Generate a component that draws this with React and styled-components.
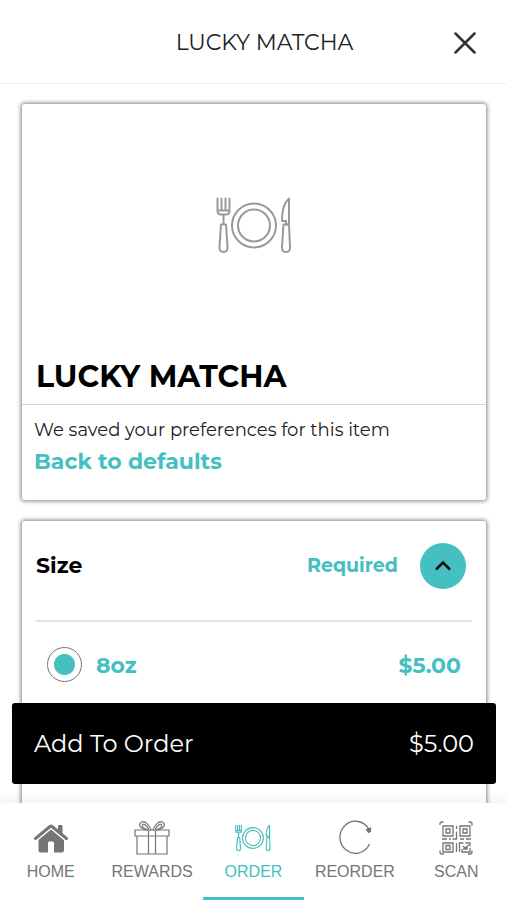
import React, { useState } from "react";
import styled, { createGlobalStyle } from "styled-components";

const teal = "#45bfbf";
const grey = "#757575";

const GlobalStyle = createGlobalStyle`
  * {
    box-sizing: border-box;
  }
  body {
    margin: 0;
    background: #fff;
    color: #000;
    font-family: Montserrat, Inter, sans-serif;
  }
  button {
    padding: 0;
    border: 0;
    background: none;
    font: inherit;
    cursor: pointer;
  }
  h1,
  h2,
  p {
    margin: 0;
  }
`;

const StyledPage = styled.div`
  height: 100vh;
  display: flex;
  flex-direction: column;
`;

const StyledHeader = styled.header`
  display: grid;
  grid-template-columns: 60px 1fr 60px;
  align-items: center;
  padding: 2px 12px 0;
  height: 84px;
  border-bottom: 1px solid #f0f0f0;
  text-align: center;

  & h1 {
    padding-left: 22px;
    font-size: 22px;
    line-height: 28px;
    font-weight: 400;
    color: #222;
  }
`;

const CloseButton = styled.button`
  display: flex;
  justify-content: center;
  color: #333;
`;

const StyledContent = styled.div`
  flex: 1;
  min-height: 0;
  position: relative;
`;

const StyledMain = styled.main`
  height: 100%;
  overflow: hidden;
  padding: 20px 21px 0 22px;
  display: flex;
  flex-direction: column;
  gap: 21px;
`;

const StyledCard = styled.section`
  flex-shrink: 0;
  border-radius: 3px;
  background: #fff;
  box-shadow: 0 0 4px 1px rgba(0, 0, 0, 0.5);
`;

const ItemImage = styled.div`
  height: 242px;
  display: flex;
  align-items: center;
  justify-content: center;
  color: #999;
`;

const ItemName = styled.h2`
  padding: 12px 14px 8px;
  border-bottom: 1px solid #d4d4d4;
  font-size: 30px;
  line-height: 38px;
  font-weight: 700;
`;

const Preferences = styled.div`
  padding: 9px 12px 22px;
  font-size: 18px;
  line-height: 32px;
  color: #222;

  & button {
    display: block;
    font-size: 22px;
    line-height: 32px;
    font-weight: 700;
    color: ${teal};
  }
`;

const GroupHeader = styled.div`
  margin: 0 14px;
  padding: 0 6px 10px 0;
  height: 101px;
  border-bottom: 2px solid #e2e2e2;
  display: flex;
  align-items: center;
  gap: 22px;
  font-size: 19px;
  line-height: 26px;
  font-weight: 700;

  & h2 {
    margin-right: auto;
    font-size: 22px;
  }
  & span {
    color: ${teal};
  }
`;

const ToggleButton = styled.button`
  width: 46px;
  height: 46px;
  border-radius: 50%;
  background: ${teal};
  color: #111;
  display: flex;
  align-items: center;
  justify-content: center;
`;

const OptionList = styled.div`
  padding-bottom: 160px;
`;

const Option = styled.label`
  display: flex;
  align-items: center;
  gap: 14px;
  height: 84px;
  padding: 0 25px 0 25px;
  color: ${teal};
  font-size: 22px;
  line-height: 28px;
  font-weight: 700;
  cursor: pointer;

  & input {
    appearance: none;
    flex-shrink: 0;
    width: 35px;
    height: 35px;
    margin: 0;
    border: 1px solid #777;
    border-radius: 50%;
  }
  & input:checked {
    background: radial-gradient(circle, ${teal} 10px, #fff 11px);
  }
  & span {
    padding-top: 4px;
  }
  & span:last-child {
    margin-left: auto;
  }
`;

const AddButton = styled.button`
  position: absolute;
  left: 12px;
  right: 11px;
  bottom: 19px;
  height: 81px;
  padding: 0 22px;
  border-radius: 3px;
  background: #000;
  color: #fff;
  display: flex;
  align-items: center;
  justify-content: space-between;
  font-size: 24px;
`;

const StyledNav = styled.nav`
  position: relative;
  display: grid;
  grid-template-columns: repeat(5, 1fr);
  height: 97px;
  background: #fff;
  box-shadow: 0 -1px 12px 2px rgba(0, 0, 0, 0.06);
`;

const NavLink = styled.a`
  display: flex;
  flex-direction: column;
  align-items: center;
  gap: 6px;
  padding-top: 17px;
  border-bottom: 3px solid ${(props) => (props.$active ? teal : "transparent")};
  color: ${(props) => (props.$active ? teal : grey)};
  font-family: "Liberation Sans", Arial, sans-serif;
  font-size: 16px;
  line-height: 20px;
  text-decoration: none;
`;

const PlateIcon = ({ width = 76, stroke = 2 }) => (
  <svg
    width={width}
    height={Math.round(width * 0.75)}
    viewBox="0 0 76 57"
    fill="none"
    stroke="currentColor"
    strokeWidth={stroke}
    strokeLinejoin="round"
    strokeLinecap="round"
  >
    <path d="M1.500 1.500v12q0 4 3.500 4h5q3.500 0 3.500-4v-12M5.500 1.500v11M9.500 1.500v11M1.500 13.500h12M7.500 18v9" />
    <path d="M5 27.500h5l1.500 22q.500 5.500-4 5.500t-4-5.500z" />
    <circle cx="38" cy="28.500" r="22" />
    <circle cx="38" cy="28.500" r="16" />
    <path d="M73 1.500q-7 6-7 22.500h4v3.500H73z" />
    <path d="M67.500 27.500H73l1 22q.500 5.500-4 5.500t-4-5.500z" />
  </svg>
);

const CloseIcon = () => (
  <svg width="22" height="22" viewBox="0 0 22 22" stroke="currentColor">
    <path d="M1.500 1.500l19 19M20.500 1.500l-19 19" strokeWidth="2.500" strokeLinecap="round" />
  </svg>
);

const ChevronIcon = () => (
  <svg width="18" height="12" viewBox="0 0 18 12" fill="none" stroke="currentColor">
    <path d="M2 9.500l7-7 7 7" strokeWidth="2.500" />
  </svg>
);

const HomeIcon = () => (
  <svg width="36" height="36" viewBox="0 0 36 36" fill="currentColor">
    <path d="M5.500 18.500L18 8l13 10.500V30q0 2.500-2.500 2.500H21V23q0-1.500-1.500-1.500h-3Q15 21.500 15 23v9.500H8Q5.500 32.500 5.500 30z" />
    <path
      d="M2 19L17 6.500q1-.800 2 0L34 19"
      fill="none"
      stroke="#fff"
      strokeWidth="6"
    />
    <path
      d="M2.500 18.500L17 6.500q1-.800 2 0l14.500 12"
      fill="none"
      stroke="currentColor"
      strokeWidth="3"
      strokeLinecap="round"
    />
    <path d="M25 6q0-1 1-1h2.500q1 0 1 1V14L25 10z" />
  </svg>
);

const GiftIcon = () => (
  <svg
    width="36"
    height="36"
    viewBox="0 0 36 36"
    fill="none"
    stroke="currentColor"
    strokeWidth="1.200"
  >
    <path d="M1 10h34v6H1zM3 16h30v18H3zM14.500 10v24M21.500 10v24" />
    <path d="M14.500 10C5 9 4 4 7.500 2S15 5 17 10M21.500 10C31 9 32 4 28.500 2S21 5 19 10" />
    <path d="M12.500 9.500Q7 6.500 8.500 4.500T15 9.500M23.500 9.500Q29 6.500 27.500 4.500T21 9.500" />
  </svg>
);

const OrderIcon = () => (
  <svg width="36" height="36" viewBox="0 -9 76 75">
    <PlateIcon stroke={2.4} />
  </svg>
);

const ReorderIcon = () => (
  <svg width="36" height="36" viewBox="0 0 36 36" fill="none" stroke="currentColor">
    <path d="M32 9.500A15.500 16 0 1 0 32.500 24" strokeWidth="1.300" />
    <path d="M29.500 9.500l4-1.500v3.500l-2 1z" fill="currentColor" strokeWidth="1.200" />
  </svg>
);

const ScanIcon = () => (
  <svg
    width="36"
    height="36"
    viewBox="0 0 36 36"
    fill="none"
    stroke="currentColor"
    strokeWidth="1.300"
  >
    <path d="M2 5V4q0-2 2-2h1.500M30.500 2H32q2 0 2 2v1.500M2 30.500V32q0 2 2 2h2M30 34h2q2 0 2-2v-1.500" />
    <path d="M5 6h10v10H5zM22 6h10v10H22zM5 23h10v9H5z" />
    <path d="M8 9h4v4H8zM25 9h4v4h-4zM8 25.500h4v4H8z" />
    <path d="M18.500 6v3M18.500 11.500v7.500h-4M4 19h5M11 19h2M22 19h4M28 19h5M18.500 23v9M21.500 32V23h4M27.500 23h4.500v3M24 29v3h8v-4M25 29h4v-3M25 26l2 2 4-3" />
  </svg>
);

const navItems = [
  { label: "HOME", icon: <HomeIcon /> },
  { label: "REWARDS", icon: <GiftIcon /> },
  { label: "ORDER", icon: <OrderIcon /> },
  { label: "REORDER", icon: <ReorderIcon /> },
  { label: "SCAN", icon: <ScanIcon /> },
];

const App = () => {
  const [size, setSize] = useState("8oz");
  const [open, setOpen] = useState(true);

  return (
    <StyledPage>
      <GlobalStyle />
      <StyledHeader>
        <span />
        <h1>LUCKY MATCHA</h1>
        <CloseButton type="button" aria-label="Close">
          <CloseIcon />
        </CloseButton>
      </StyledHeader>

      <StyledContent>
        <StyledMain>
          <StyledCard>
            <ItemImage>
              <PlateIcon />
            </ItemImage>
            <ItemName>LUCKY MATCHA</ItemName>
            <Preferences>
              <p>We saved your preferences for this item</p>
              <button type="button" onClick={() => setSize("8oz")}>
                Back to defaults
              </button>
            </Preferences>
          </StyledCard>

          <StyledCard>
            <GroupHeader>
              <h2>Size</h2>
              <span>Required</span>
              <ToggleButton
                type="button"
                aria-label="Toggle size options"
                aria-expanded={open}
                onClick={() => setOpen(!open)}
              >
                <ChevronIcon />
              </ToggleButton>
            </GroupHeader>
            {open && (
              <OptionList>
                <Option>
                  <input
                    type="radio"
                    name="size"
                    value="8oz"
                    checked={size === "8oz"}
                    onChange={(e) => setSize(e.target.value)}
                  />
                  <span>8oz</span>
                  <span>$5.00</span>
                </Option>
              </OptionList>
            )}
          </StyledCard>
        </StyledMain>

        <AddButton type="button">
          <span>Add To Order</span>
          <span>$5.00</span>
        </AddButton>
      </StyledContent>

      <StyledNav>
        {navItems.map((item) => (
          <NavLink
            key={item.label}
            href={`#${item.label.toLowerCase()}`}
            $active={item.label === "ORDER"}
          >
            {item.icon}
            {item.label}
          </NavLink>
        ))}
      </StyledNav>
    </StyledPage>
  );
};

export default App;
